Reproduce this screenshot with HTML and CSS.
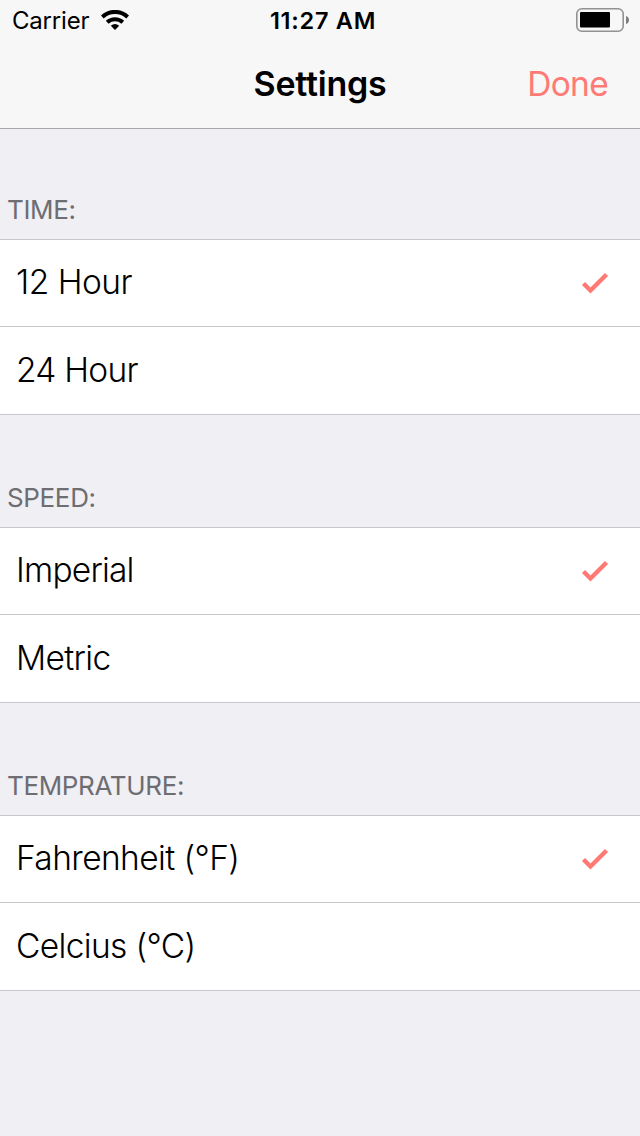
FILE: index.html
```html
<!DOCTYPE html>
<html lang="en">
<head>
<meta charset="utf-8">
<title>Settings</title>
<link rel="stylesheet" href="styles.css">
</head>
<body>
<header class="top">
  <div class="status">
    <div class="carrier"><span class="carrier-name">Carrier</span>
      <svg class="wifi" width="28" height="20" viewBox="0 0 28 20"><path d="M14 20l4.2-4.2a6.5 6.5 0 0 0-8.4 0z"/><path d="M6.2 12.2a11.7 11.7 0 0 1 15.6 0M1.3 7a18.5 18.5 0 0 1 25.4 0" fill="none" stroke="#000" stroke-width="4.1"/></svg>
    </div>
    <span class="clock">11:27 AM</span>
    <svg class="battery" width="53" height="24" viewBox="0 0 53 24"><rect x=".8" y=".8" width="46.4" height="22.4" rx="5" fill="none" stroke="#929294" stroke-width="1.6"/><rect x="4" y="4" width="30" height="15.5" rx="1"/><path d="M50 8q3 1 3 4t-3 4z" fill="#7d7d7f"/></svg>
  </div>
  <nav class="nav"><h1 class="title">Settings</h1><a class="done">Done</a></nav>
</header>
<main>
  <section class="group">
    <h2 class="heading">TIME:</h2>
    <div class="row"><span class="label l1">12 Hour</span><svg class="check" width="28" height="22" viewBox="0 0 28 22"><path d="M2.5 11.5l7 7L25.5 2.5"/></svg></div>
    <div class="row"><span class="label l2">24 Hour</span></div>
  </section>
  <section class="group">
    <h2 class="heading">SPEED:</h2>
    <div class="row"><span class="label l3">Imperial</span><svg class="check" width="28" height="22" viewBox="0 0 28 22"><path d="M2.5 11.5l7 7L25.5 2.5"/></svg></div>
    <div class="row"><span class="label l4">Metric</span></div>
  </section>
  <section class="group">
    <h2 class="heading">TEMPRATURE:</h2>
    <div class="row"><span class="label l5">Fahrenheit (°F)</span><svg class="check" width="28" height="22" viewBox="0 0 28 22"><path d="M2.5 11.5l7 7L25.5 2.5"/></svg></div>
    <div class="row"><span class="label l6">Celcius (°C)</span></div>
  </section>
</main>
</body>
</html>
```
FILE: styles.css
```css
* { box-sizing: border-box; }
body { margin: 0; min-height: 1136px; background: #efeff4; color: #000; font-family: Inter, "Liberation Sans", sans-serif; }
.top { height: 129px; background: #f7f7f7; border-bottom: 1px solid #a8a8aa; }
.status { height: 40px; display: grid; grid-template-columns: 1fr auto 1fr; align-items: center; padding: 0 11px 0 12px; font-size: 24px; }
.carrier { display: flex; align-items: center; gap: 12px; }
.carrier-name { width: 77px; letter-spacing: -.2px; padding-top: 1px; }
.clock { font-weight: 600; font-size: 23.5px; letter-spacing: .75px; padding: 1px 0 0 5px; }
.battery { justify-self: end; }
.nav { height: 88px; display: grid; grid-template-columns: 1fr auto 1fr; align-items: center; padding: 0 32px; font-size: 34px; line-height: 41px; }
.title { grid-column: 2; margin: 0; padding-bottom: 1px; font-size: 34px; font-weight: 600; letter-spacing: -.25px; }
.done { justify-self: end; padding-top: 1px; color: #ff7a74; font-size: 33.5px; font-weight: 400; letter-spacing: -.7px; }
.group { height: 288px; }
.heading { height: 111px; margin: 0; padding: 0 7px 14px; display: flex; align-items: flex-end; font-size: 26px; line-height: 31px; font-weight: 400; letter-spacing: -.35px; color: #6d6d72; border-bottom: 1px solid #c8c7cc; }
.row { height: 88px; padding: 0 31px 0 16px; display: flex; align-items: center; justify-content: space-between; background: #fff; border-bottom: 1px solid #c8c7cc; font-size: 33.5px; line-height: 41px; font-weight: 300; }
.heading + .row { height: 87px; }
.label { letter-spacing: -.65px; }
.heading + .row .label { padding-bottom: 1px; }
.l1 { letter-spacing: -.5px; }
.l2 { letter-spacing: -.75px; }
.l3 { letter-spacing: -.8px; }
.l5 { letter-spacing: -.6px; }
.check { fill: none; stroke: #ff7a74; stroke-width: 4.4; }
```
